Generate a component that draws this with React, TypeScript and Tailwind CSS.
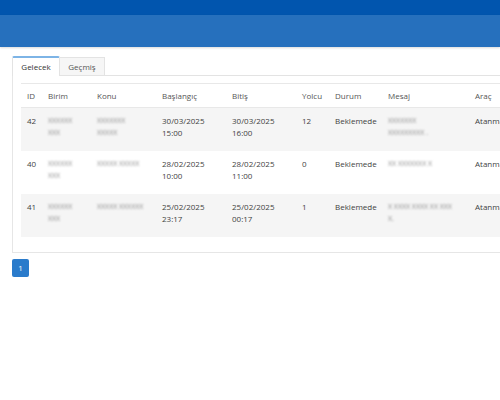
import React from 'react';

interface Trip {
  id: number;
  birim: string[];
  konu: string[];
  start: [string, string];
  end: [string, string];
  yolcu: number;
  mesaj: string[];
}

const trips: Trip[] = [
  { id: 42, birim: ['XXXXXX', 'XXX'], konu: ['XXXXXXX', 'XXXXX'], start: ['30/03/2025', '15:00'], end: ['30/03/2025', '16:00'], yolcu: 12, mesaj: ['XXXXXXX', 'XXXXXXXXX .'] },
  { id: 40, birim: ['XXXXXX', 'XXX'], konu: ['XXXXX XXXXX'], start: ['28/02/2025', '10:00'], end: ['28/02/2025', '11:00'], yolcu: 0, mesaj: ['XX XXXXXXX X'] },
  { id: 41, birim: ['XXXXXX', 'XXX'], konu: ['XXXXX XXXXXX'], start: ['25/02/2025', '23:17'], end: ['25/02/2025', '00:17'], yolcu: 1, mesaj: ['X XXXX XXXX XX XXX', 'X.'] },
];

const cols = ['w-[21px]', 'w-[49px]', 'w-[65px]', 'w-[70px]', 'w-[70px]', 'w-[33px]', 'w-[53px]', 'w-[87px]', 'w-[132px]'];
const heads = ['ID', 'Birim', 'Konu', 'Başlangıç', 'Bitiş', 'Yolcu', 'Durum', 'Mesaj', 'Araç'];

const Blur: React.FC<{ lines: string[] }> = ({ lines }) => (
  <div className="blur-[1.3px] text-[#8c8c8c] text-[7px] leading-[12px]">
    {lines.map((l, i) => <div key={i}>{l}</div>)}
  </div>
);

export default function App() {
  return (
    <div className="w-[500px] h-[400px] overflow-hidden bg-white text-[#3f3f3f]" style={{ fontFamily: '"Open Sans", "Liberation Sans", sans-serif' }}>
      <div className="h-[15px] bg-[#0155ae]" />
      <div className="h-[32px] bg-[#2670bd] shadow-[0_1px_2px_rgba(0,0,0,0.15)]" />

      <div className="pl-[12px] pt-[9px] w-[620px]">
        <div className="flex h-[20px] items-end">
          <div className="h-[20px] w-[48px] border-x border-t-2 border-[#e3e3e3] border-t-[#7db4e6] bg-white flex items-center justify-center text-[8px] text-[#333] rounded-t-[2px]">
            Gelecek
          </div>
          <div className="h-[19px] w-[45px] border-r border-t border-[#e3e3e3] border-b bg-[#f6f6f6] flex items-center justify-center text-[8px] text-[#555]">
            Geçmiş
          </div>
          <div className="flex-1 border-b border-[#e3e3e3]" />
        </div>

        <div className="border-l border-b border-[#e6e6e6] px-[8px] pt-[7px] pb-[15px]">
          <table className="table-fixed border-collapse text-[8px] leading-[12px] w-[580px]">
            <colgroup>
              {cols.map((c, i) => <col key={i} className={c} />)}
            </colgroup>
            <thead>
              <tr className="h-[24px] border-t border-b border-[#e8e8e8]">
                {heads.map(h => (
                  <th key={h} className="px-[6px] text-left font-normal text-[#555]">{h}</th>
                ))}
              </tr>
            </thead>
            <tbody>
              {trips.map((t, i) => (
                <tr key={t.id} className={`h-[43px] align-top ${i % 2 === 0 ? 'bg-[#f5f5f5]' : 'bg-white'}`}>
                  <td className="px-[6px] pt-[7px]">{t.id}</td>
                  <td className="px-[6px] pt-[7px]"><Blur lines={t.birim} /></td>
                  <td className="px-[6px] pt-[7px]"><Blur lines={t.konu} /></td>
                  <td className="px-[6px] pt-[7px]">{t.start[0]}<br />{t.start[1]}</td>
                  <td className="px-[6px] pt-[7px]">{t.end[0]}<br />{t.end[1]}</td>
                  <td className="px-[6px] pt-[7px]">{t.yolcu}</td>
                  <td className="px-[6px] pt-[7px]">Beklemede</td>
                  <td className="px-[6px] pt-[7px]"><Blur lines={t.mesaj} /></td>
                  <td className="px-[6px] pt-[7px]">Atanmadı</td>
                </tr>
              ))}
            </tbody>
          </table>
        </div>

        <div className="mt-[6px]">
          <button className="h-[18px] w-[17px] rounded-[2px] bg-[#2a7bcb] text-white text-[8px] flex items-center justify-center">1</button>
        </div>
      </div>
    </div>
  );
}
